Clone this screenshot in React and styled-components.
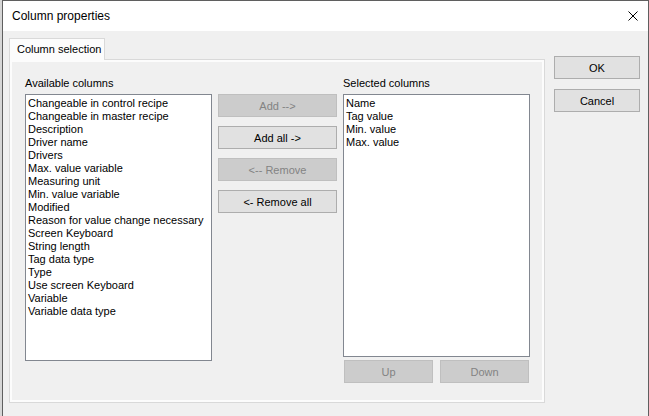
import React from 'react'
import styled, {createGlobalStyle} from 'styled-components'

const GlobalStyle = createGlobalStyle`
  html, body {
    margin: 0;
    padding: 0;
  }
  body {
    width: 649px;
    height: 416px;
    overflow: hidden;
    background: #dadada;
    font-family: "Liberation Sans", Arial, sans-serif;
    color: #000;
  }
`

const Screen = styled.div`
  display: flex;
  width: 649px;
  height: 416px;
  overflow: hidden;
`

// strip of the application behind the dialog
const Behind = styled.div`
  flex: none;
  width: 2px;
  background: #d6d6d6;
`

const Window = styled.div`
  flex: 1;
  display: flex;
  flex-direction: column;
  border: 1px solid #5f5f5f;
  border-bottom: none;
  background: #f0f0f0;
`

const TitleBar = styled.div`
  flex: none;
  height: 30px;
  display: flex;
  align-items: center;
  justify-content: space-between;
  padding: 0 10px 0 9px;
  background: #fff;
  font-size: 12px;
`

const CloseIcon = () =>
  <svg width="10" height="10" viewBox="0 0 10 10">
    <path d="M0.5 0.5L9.5 9.5M9.5 0.5L0.5 9.5" stroke="#000" strokeWidth="1" fill="none" />
  </svg>

const Body = styled.div`
  flex: 1;
  display: flex;
  padding: 7px 8px 0 6px;
  gap: 9px;
`

const TabArea = styled.div`
  width: 536px;
  display: flex;
  flex-direction: column;
`

const Tab = styled.div`
  position: relative;
  z-index: 1;
  width: 96px;
  height: 22px;
  box-sizing: border-box;
  margin-bottom: -1px;
  padding: 3px 0 0 7px;
  border: 1px solid #d9d9d9;
  border-bottom: none;
  background: #fcfcfc;
  font-size: 11px;
  line-height: 15px;
`

const Panel = styled.div`
  height: 344px;
  box-sizing: border-box;
  padding: 17px 0 0 15px;
  border: 1px solid #d9d9d9;
  box-shadow: inset 0 0 0 2px #fcfcfc;
`

const Columns = styled.div`
  display: grid;
  grid-template-columns: 187px 119px 187px;
  column-gap: 6px;
`

const Column = styled.div`
  display: flex;
  flex-direction: column;
`

const Label = styled.div`
  height: 13px;
  margin-bottom: 4px;
  font-size: 11px;
  line-height: 13px;
`

const ListBox = styled.div`
  height: ${p => p.$height}px;
  box-sizing: border-box;
  padding: 2px 2px;
  border: 1px solid #828790;
  background: #fff;
  font-size: 11px;
  line-height: 13px;
  white-space: nowrap;
  overflow: hidden;
`

const Item = styled.div`
  height: 13px;
`

const MoveButtons = styled.div`
  display: flex;
  flex-direction: column;
  gap: 9px;
  padding-top: 17px;
`

const Button = styled.button`
  width: ${p => p.$width ? `${p.$width}px` : '100%'};
  height: 23px;
  box-sizing: border-box;
  padding: 0;
  border: 1px solid ${p => p.disabled ? '#bfbfbf' : '#adadad'};
  background: ${p => p.disabled ? '#cccccc' : '#e1e1e1'};
  color: ${p => p.disabled ? '#838383' : '#000'};
  font-family: "Liberation Sans", Arial, sans-serif;
  font-size: 11px;
`

const OrderRow = styled.div`
  display: flex;
  gap: 7px;
  margin-top: 3px;
  padding: 0 1px;
`

const DialogButtons = styled.div`
  display: flex;
  flex-direction: column;
  gap: 10px;
  padding-top: 18px;
`

const available = [
  'Changeable in control recipe',
  'Changeable in master recipe',
  'Description',
  'Driver name',
  'Drivers',
  'Max. value variable',
  'Measuring unit',
  'Min. value variable',
  'Modified',
  'Reason for value change necessary',
  'Screen Keyboard',
  'String length',
  'Tag data type',
  'Type',
  'Use screen Keyboard',
  'Variable',
  'Variable data type',
]

const selected = ['Name', 'Tag value', 'Min. value', 'Max. value']

export default function App() {
  return (
    <Screen>
      <GlobalStyle />
      <Behind />
      <Window>
        <TitleBar>
          <span>Column properties</span>
          <CloseIcon />
        </TitleBar>
        <Body>
          <TabArea>
            <Tab>Column selection</Tab>
            <Panel>
              <Columns>
                <Column>
                  <Label>Available columns</Label>
                  <ListBox $height={267}>
                    {available.map(name => <Item key={name}>{name}</Item>)}
                  </ListBox>
                </Column>
                <MoveButtons>
                  <Button disabled>Add --&gt;</Button>
                  <Button>Add all -&gt;</Button>
                  <Button disabled>&lt;-- Remove</Button>
                  <Button>&lt;- Remove all</Button>
                </MoveButtons>
                <Column>
                  <Label>Selected columns</Label>
                  <ListBox $height={263}>
                    {selected.map(name => <Item key={name}>{name}</Item>)}
                  </ListBox>
                  <OrderRow>
                    <Button disabled $width={89}>Up</Button>
                    <Button disabled $width={89}>Down</Button>
                  </OrderRow>
                </Column>
              </Columns>
            </Panel>
          </TabArea>
          <DialogButtons>
            <Button $width={86}>OK</Button>
            <Button $width={86}>Cancel</Button>
          </DialogButtons>
        </Body>
      </Window>
    </Screen>
  )
}
